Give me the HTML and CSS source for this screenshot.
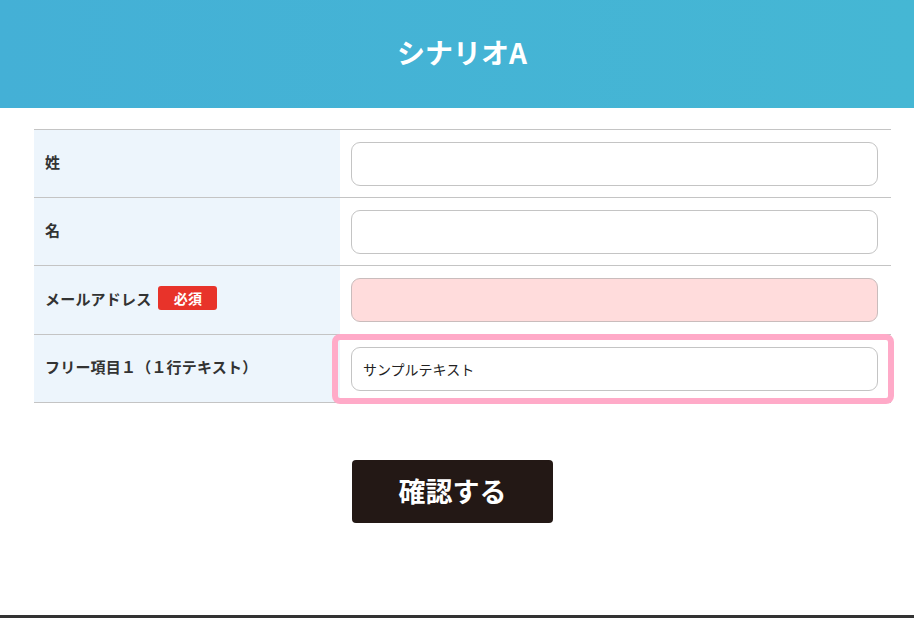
FILE: index.html
```html
<!DOCTYPE html>
<html lang="ja">
<head>
<meta charset="utf-8">
<title>シナリオA</title>
<link rel="stylesheet" href="styles.css">
</head>
<body>
<div class="page">
  <header class="header"><h1 class="title">シナリオA</h1></header>
  <main class="main">
    <div class="form">
      <div class="row">
        <div class="label">姓</div>
        <div class="field"><div class="input"></div></div>
      </div>
      <div class="row">
        <div class="label">名</div>
        <div class="field"><div class="input"></div></div>
      </div>
      <div class="row row-tall">
        <div class="label">メールアドレス<span class="badge">必須</span></div>
        <div class="field"><div class="input input-error"></div></div>
      </div>
      <div class="row">
        <div class="label">フリー項目１（１行テキスト）</div>
        <div class="field field-highlight"><div class="input">サンプルテキスト</div><div class="highlight"></div></div>
      </div>
    </div>
    <div class="actions"><button class="submit">確認する</button></div>
  </main>
  <footer class="footer"></footer>
</div>
</body>
</html>
```

FILE: styles.css
```css
html, body {
  margin: 0;
  padding: 0;
  background: #ffffff;
}
body {
  font-family: "Noto Sans CJK JP", "Noto Sans", sans-serif;
  color: #333333;
}
.page {
  display: flex;
  flex-direction: column;
  min-height: 618px;
}
.header {
  height: 108px;
  background: linear-gradient(90deg, #44b0d6 0%, #45b7d4 100%);
  display: flex;
  align-items: center;
  justify-content: center;
}
.title {
  margin: 0 0 4px 10px;
  color: #ffffff;
  font-size: 28px;
  font-weight: 700;
  line-height: 1;
}
.main {
  flex: 1;
  padding-top: 21px;
}
.form {
  margin-left: 34px;
  width: 857px;
  border-top: 1px solid #c4c4c4;
}
.row {
  display: flex;
  border-bottom: 1px solid #c4c4c4;
  height: 67px;
}
.row-tall {
  height: 68px;
}
.label {
  width: 295px;
  padding-left: 11px;
  padding-bottom: 4px;
  box-sizing: content-box;
  background: #edf5fc;
  display: flex;
  align-items: center;
  font-size: 15px;
  font-weight: 700;
  color: #333333;
  letter-spacing: 0.2px;
}
.badge {
  margin-left: 7px;
  width: 59px;
  height: 24px;
  background: #e8332a;
  color: #ffffff;
  border-radius: 3px;
  font-size: 14px;
  font-weight: 700;
  display: inline-flex;
  align-items: center;
  justify-content: center;
}
.field {
  flex: 1;
  padding: 12px 13px 11px 11px;
  position: relative;
}
.input {
  box-sizing: border-box;
  height: 44px;
  border: 1px solid #c4c4c4;
  border-radius: 9px;
  background: #ffffff;
  display: flex;
  align-items: center;
  padding-left: 11px;
  font-size: 14px;
  color: #222222;
}
.input-error {
  background: #ffdcdc;
  border-color: #c9bcbc;
}
.highlight {
  position: absolute;
  left: -8px;
  right: -3px;
  top: -1px;
  bottom: -2px;
  border: 6px solid #ffaac8;
  border-radius: 8px;
  pointer-events: none;
}
.actions {
  padding-top: 57px;
  padding-left: 352px;
}
.submit {
  width: 201px;
  height: 63px;
  border: none;
  border-radius: 4px;
  background: #231815;
  color: #ffffff;
  font-family: "Noto Sans CJK JP", "Noto Sans", sans-serif;
  font-size: 27px;
  font-weight: 700;
  padding: 0 0 3px 0;
}
.footer {
  height: 3px;
  background: #333333;
}
```
